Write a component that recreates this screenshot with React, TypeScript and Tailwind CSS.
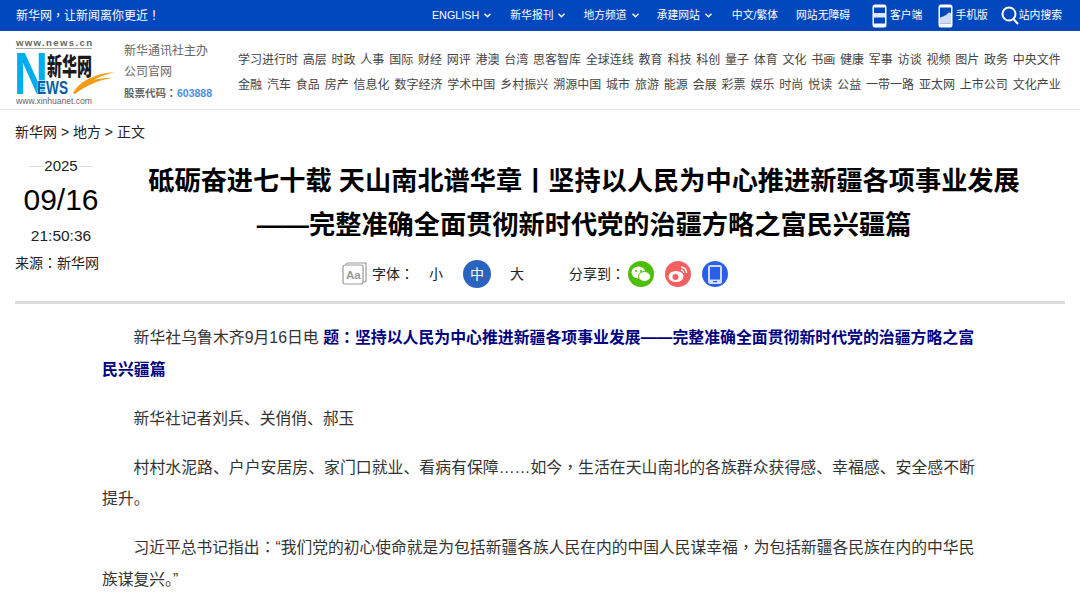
const top = ["ENGLISH", "新华报刊", "地方频道", "承建网站"];
const row1 = "学习进行时 高层 时政 人事 国际 财经 网评 港澳 台湾 思客智库 全球连线 教育 科技 科创 量子 体育 文化 书画 健康 军事 访谈 视频 图片 政务 中央文件".split(" ");
const row2 = "金融 汽车 食品 房产 信息化 数字经济 学术中国 乡村振兴 溯源中国 城市 旅游 能源 会展 彩票 娱乐 时尚 悦读 公益 一带一路 亚太网 上市公司 文化产业".split(" ");

function P({ children }: { children: React.ReactNode }) {
  return <span className="font-['Noto_Sans_CJK_TC'] leading-none">{children}</span>;
}

function Chevron() {
  return (
    <svg width="7" height="5" viewBox="0 0 7 5" fill="none" stroke="#fff" strokeWidth="1.4">
      <path d="M.5.8l3 3 3-3" />
    </svg>
  );
}

function Phone({ kind }: { kind: "app" | "chart" }) {
  return (
    <svg width="15" height="24" viewBox="0 0 15 24">
      <rect x="0.5" y="0.5" width="14" height="23" rx="2.5" fill="#fff" />
      <rect x="2" y="3.5" width="11" height="16" fill="#0047bd" />
      {kind === "app" ? (
        <rect x="2" y="9" width="11" height="4.5" fill="#dfe8fa" />
      ) : (
        <path d="M2 19.5v-6l3-1 3-1.5 3-2.5 2 .5v10.5z" fill="#cfdcf5" />
      )}
    </svg>
  );
}

function Logo() {
  return (
    <svg width="101" height="68" viewBox="0 0 101 68" className="shrink-0 overflow-visible">
      <text x="1" y="8" fontSize="9.6" fontWeight="700" textLength="76" fill="#666" fontFamily="Liberation Sans">www.news.cn</text>
      <rect x="1" y="10" width="76" height="1" fill="#aaa" />
      <text x="-1" y="56" fontSize="60" fontWeight="700" fill="#00aeef" textLength="34" lengthAdjust="spacingAndGlyphs" fontFamily="Liberation Sans">N</text>
      <text x="32" y="37" fontSize="24" fontWeight="900" fill="#1a1a1a" textLength="45" lengthAdjust="spacingAndGlyphs" fontFamily="Noto Sans CJK SC">新华网</text>
      <text x="22" y="56" fontSize="19" fontWeight="700" fill="#0b5da8" stroke="#fff" strokeWidth="1" paintOrder="stroke" textLength="31" lengthAdjust="spacingAndGlyphs" fontFamily="Liberation Sans">EWS</text>
      <path d="M58 55C64 45 76 36 100 34 90 37 83 39 79 42 87 40 93 40 97 40 84 42 72 47 60 56z" fill="#f39c12" />
      <text x="1" y="66" fontSize="8.6" fill="#666" textLength="76" fontFamily="Liberation Sans">www.xinhuanet.com</text>
    </svg>
  );
}

function Aa() {
  return (
    <svg width="25" height="24" viewBox="0 0 25 24" fill="none" stroke="#999" strokeWidth="1.2">
      <path d="M4 2.5C4 1.5 5 1 6 1h18v17c0 1-1 2-2 2" />
      <rect x="1" y="3" width="20" height="19" rx="2" fill="#fff" />
      <text x="4" y="17" fontSize="11.5" fontWeight="700" fill="#999" stroke="none" fontFamily="Liberation Sans">Aa</text>
    </svg>
  );
}

export default function App() {
  return (
    <div className="w-[1080px] h-[594px] overflow-hidden bg-white text-[#222]" style={{ fontFamily: '"Liberation Sans","Noto Sans CJK SC",sans-serif' }}>
      <div className="h-[31px] bg-[#0047bd] text-white text-xs flex items-center pl-[16px] pr-[18px]">
        <span>新华网<P>，</P>让新闻离你更近<P>！</P></span>
        <div className="ml-auto flex items-center text-[10.8px]">
          {top.map((t) => (
            <span key={t} className={t === "ENGLISH" ? "flex items-center gap-[5px] mr-[19px]" : t === "承建网站" ? "flex items-center gap-[5px] mr-[20px]" : "flex items-center gap-[5px] mr-[18px]"}><span>{t}</span><Chevron /></span>
          ))}
          <span className="mr-[18px]">中文/繁体</span>
          <span className="mr-[22px]">网站无障碍</span>
          <span className="flex items-center gap-[3px] mr-[16px]"><Phone kind="app" /><span>客户端</span></span>
          <span className="flex items-center gap-[2px] mr-[13px]"><Phone kind="chart" /><span>手机版</span></span>
          <span className="flex items-center">
            <svg width="18" height="19" viewBox="0 0 18 19" fill="none" stroke="#fff" strokeWidth="2"><circle cx="8" cy="8" r="6.5" /><path d="M12.5 13l4.5 5" /></svg>
            <span>站内搜索</span>
          </span>
        </div>
      </div>

      <div className="h-[79px] border-b border-[#e5e5e5] flex pl-[15px] pr-[19px] pt-[7px]">
        <Logo />
        <div className="ml-[8px] w-[114px] shrink-0 text-xs text-[#666] leading-[21px] pt-[3px]">
          <div>新华通讯社主办</div>
          <div>公司官网</div>
          <div className="text-[10.5px] font-bold flex"><span className="text-[#666] w-[53px]">股票代码<P>：</P></span><span className="text-[#4a90d9]">603888</span></div>
        </div>
        <div className="flex-1 text-xs text-[#444] pt-[9px]">
          <div className="flex justify-between h-[25px] items-center">{row1.map((x) => <span key={x}>{x}</span>)}</div>
          <div className="flex justify-between h-[25px] items-center">{row2.map((x) => <span key={x}>{x}</span>)}</div>
        </div>
      </div>

      <div className="px-[15px]">
        <div className="text-sm h-[44px] flex items-center">新华网 &gt; 地方 &gt; 正文</div>
        <div className="flex h-[147px] border-b-[3px] border-[#dcdcdc] box-content">
          <div className="w-[92px] shrink-0 text-center">
            <div className="flex items-center justify-center gap-[1px] text-[15px] h-[18px] mt-[3px]">
              <span className="w-[14px] h-px bg-[#ddd]" />2025<span className="w-[14px] h-px bg-[#ddd]" />
            </div>
            <div className="text-[30px] leading-[34px] mt-[8px] text-black">09/16</div>
            <div className="text-[15.5px] mt-[9px] leading-[20px]">21:50:36</div>
            <div className="text-sm text-left mt-[7px] leading-[20px]">来源<P>：</P>新华网</div>
          </div>
          <div className="flex-1 min-w-0">
            <h1 className="text-[26.2px] font-bold leading-[44px] text-center text-black pr-[4px] whitespace-nowrap mt-[5px]">
              <div>砥砺奋进七十载 天山南北谱华章丨坚持以人民为中心推进新疆各项事业发展</div>
              <div>——完整准确全面贯彻新时代党的治疆方略之富民兴疆篇</div>
            </h1>
            <div className="flex items-center text-sm h-[28px] mt-[13px] pl-[235px]">
              <Aa />
              <span className="ml-[5px]">字体<P>：</P></span>
              <span className="ml-[15px]">小</span>
              <span className="ml-[20px] w-[28px] h-[28px] rounded-full bg-[#2b64c0] text-white flex items-center justify-center">中</span>
              <span className="ml-[19px]">大</span>
              <span className="ml-[45px]">分享到<P>：</P></span>
              <span className="ml-[3px] w-[26px] h-[26px] rounded-full bg-[#4cbf00] flex items-center justify-center">
                <svg width="20" height="17" viewBox="0 0 20 17" fill="#fff"><ellipse cx="7.5" cy="6.5" rx="7" ry="6" /><ellipse cx="13.5" cy="10.5" rx="6" ry="5" stroke="#4cbf00" /><circle cx="5" cy="5" r="1" fill="#4cbf00" /><circle cx="10" cy="5" r="1" fill="#4cbf00" /></svg>
              </span>
              <span className="ml-[11px] w-[26px] h-[26px] rounded-full bg-[#f55f5f] flex items-center justify-center">
                <svg width="20" height="18" viewBox="0 0 20 18" fill="none"><ellipse cx="8" cy="11.5" rx="7.5" ry="5.5" fill="#fff" /><circle cx="7.5" cy="12" r="3" fill="#f55f5f" /><path d="M13 2a5.5 5.5 0 0 1 5.5 6M13 5a2.5 2.5 0 0 1 2.5 3" stroke="#fff" strokeWidth="1.4" /></svg>
              </span>
              <span className="ml-[11px] w-[26px] h-[26px] rounded-full bg-[#2b5fe8] flex items-center justify-center">
                <svg width="14" height="19" viewBox="0 0 14 19"><rect width="14" height="19" rx="2.5" fill="#cfdcff" /><rect x="2" y="2" width="10" height="12.5" fill="#2b5fe8" /><rect x="5" y="16" width="4" height="1.2" fill="#2b5fe8" /></svg>
              </span>
            </div>
          </div>
        </div>
        <div className="pl-[87px] pt-[18px] text-[15.88px] leading-[31.5px] text-[#333] w-[963px]">
          <p className="indent-[31.5px] mb-[17.6px]">新华社乌鲁木齐9月16日电 <b className="text-[#000080]">题<P>：</P>坚持以人民为中心推进新疆各项事业发展——完整准确全面贯彻新时代党的治疆方略之富民兴疆篇</b></p>
          <p className="indent-[31.5px] mb-[17.6px] text-[15.77px]">新华社记者刘兵、关俏俏、郝玉</p>
          <p className="indent-[31.5px] mb-[17.6px]">村村水泥路、户户安居房、家门口就业、看病有保障……如今<P>，</P>生活在天山南北的各族群众获得感、幸福感、安全感不断提升。</p>
          <p className="indent-[31.5px] text-[15.77px]">习近平总书记指出<P>：</P>“我们党的初心使命就是为包括新疆各族人民在内的中国人民谋幸福<P>，</P>为包括新疆各民族在内的中华民族谋复兴。”</p>
        </div>
      </div>
    </div>
  );
}
